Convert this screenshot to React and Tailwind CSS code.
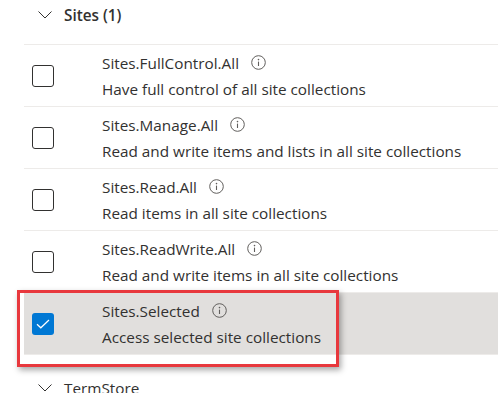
import React from 'react';

const permissions = [
  { name: 'Sites.FullControl.All', desc: 'Have full control of all site collections' },
  { name: 'Sites.Manage.All', desc: 'Read and write items and lists in all site collections' },
  { name: 'Sites.Read.All', desc: 'Read items in all site collections' },
  { name: 'Sites.ReadWrite.All', desc: 'Read and write items in all site collections' },
  { name: 'Sites.Selected', desc: 'Access selected site collections', checked: true },
];

const Chevron = () => (
  <svg width="14" height="8" viewBox="0 0 14 8" fill="none" className="shrink-0">
    <path d="M0.5 0.5 L7 7 L13.5 0.5" stroke="#323130" strokeWidth="1" />
  </svg>
);

const InfoIcon = () => (
  <svg width="15" height="15" viewBox="0 0 15 15" fill="none" className="shrink-0">
    <circle cx="7.5" cy="7.5" r="6.8" stroke="#605e5c" strokeWidth="1" />
    <circle cx="7.5" cy="4.6" r="0.8" fill="#605e5c" />
    <path d="M7.5 6.6 V11" stroke="#605e5c" strokeWidth="1.1" />
  </svg>
);

const Checkbox = ({ checked }) =>
  checked ? (
    <div className="w-[22px] h-[22px] rounded-[3px] bg-[#0078d4] flex items-center justify-center shrink-0">
      <svg width="14" height="10" viewBox="0 0 14 10" fill="none">
        <path d="M1 5.2 L4.8 8.8 L13 1" stroke="white" strokeWidth="1.2" />
      </svg>
    </div>
  ) : (
    <div className="w-[22px] h-[22px] rounded-[3px] border border-[#323130] bg-white shrink-0" />
  );

const PermissionRow = ({ item }) => (
  <div
    className={`flex items-center h-[62px] border-b border-[#edebe9] ${
      item.checked ? 'bg-[#e1dfdd]' : ''
    }`}
  >
    <div className="pl-[8px] w-[78px]">
      <Checkbox checked={item.checked} />
    </div>
    <div className="flex flex-col gap-[6px]">
      <div className="flex items-center gap-[12px] leading-[20px]">
        <span>{item.name}</span>
        <InfoIcon />
      </div>
      <div className="leading-[20px]">{item.desc}</div>
    </div>
  </div>
);

export default function App() {
  return (
    <div
      className="relative w-[498px] h-[393px] overflow-hidden bg-white text-[#323130] text-[15.3px]"
      style={{ fontFamily: '"Open Sans", "Noto Sans", sans-serif' }}
    >
      <div className="flex items-center gap-[12px] pl-[38px] h-[30px]">
        <Chevron />
        <span className="font-semibold">Sites (1)</span>
      </div>
      <div className="ml-[24px] mt-[14px] border-t border-[#edebe9]">
        {permissions.map((p) => (
          <PermissionRow key={p.name} item={p} />
        ))}
      </div>
      <div className="flex items-center gap-[12px] pl-[38px] h-[30px] mt-[18px]">
        <Chevron />
        <span>TermStore</span>
      </div>

      {/* highlight annotation */}
      <div className="absolute left-[17px] top-[290px] w-[322px] h-[77px] border-[3px] border-[#e8383d] shadow-[2px_3px_6px_rgba(0,0,0,0.35)]" />
    </div>
  );
}
